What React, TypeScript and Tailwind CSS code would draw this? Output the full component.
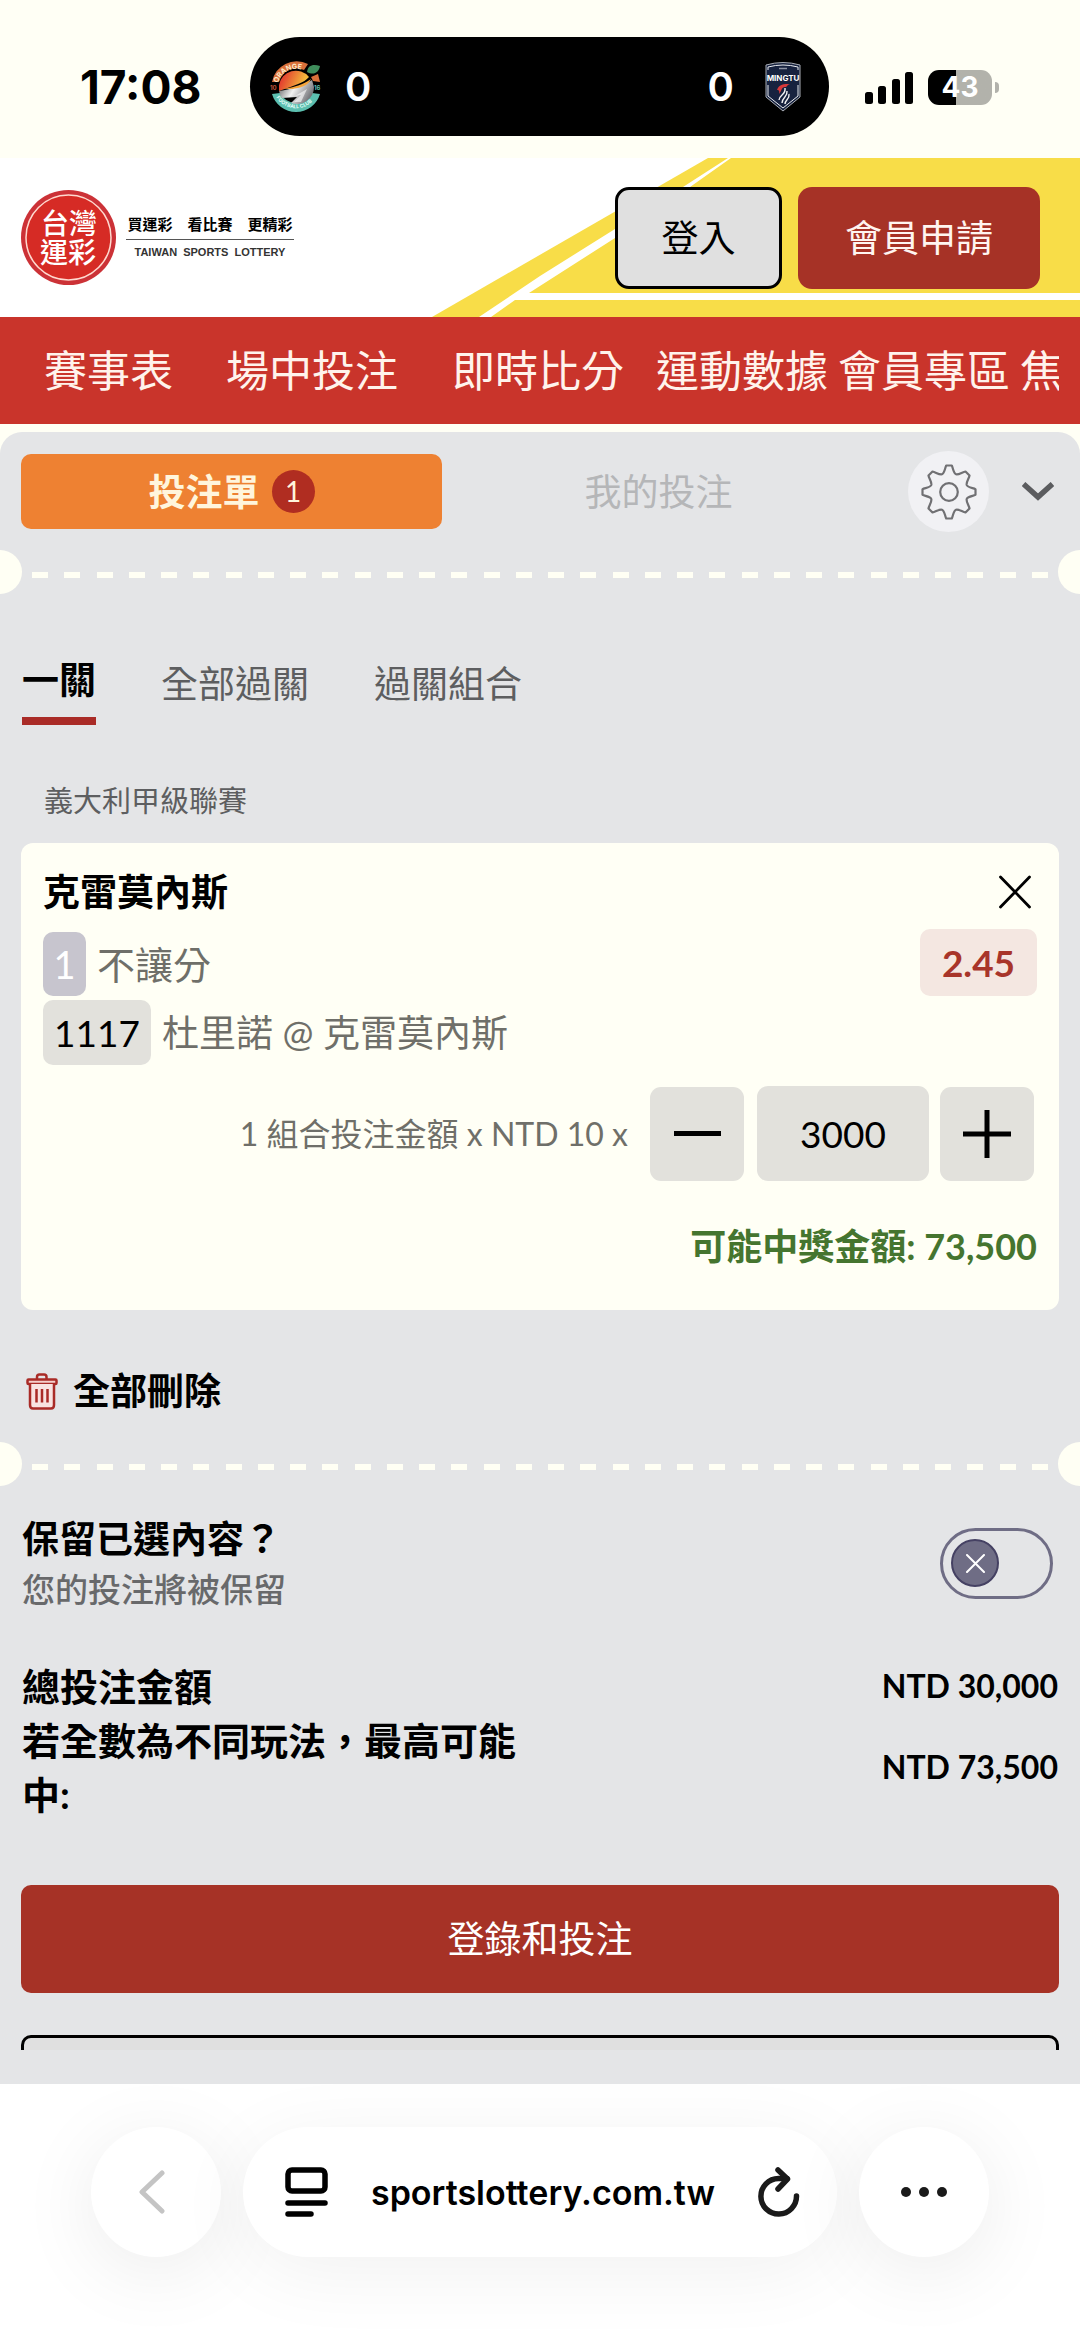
import { useState } from "react";

const navItems = [
  { label: "賽事表", space: "mr-[53px]" },
  { label: "場中投注", space: "mr-[54px]" },
  { label: "即時比分", space: "mr-8" },
  { label: "運動數據", space: "mr-[10px]" },
  { label: "會員專區", space: "mr-[10px]" },
  { label: "焦點", space: "" },
];

function OrangeLogo() {
  return (
    <svg className="w-[52px] h-[54px]" viewBox="0 0 52 54" aria-hidden="true">
      <defs>
        <linearGradient id="sun" x1="0" y1="0" x2="1" y2="0.3">
          <stop offset="0.2" stopColor="#e3402f" />
          <stop offset="0.9" stopColor="#f3b73c" />
        </linearGradient>
        <linearGradient id="ball" x1="0" y1="0" x2="1" y2="0.4">
          <stop offset="0" stopColor="#4d4d50" />
          <stop offset="0.5" stopColor="#f2f2f2" />
          <stop offset="1" stopColor="#77777c" />
        </linearGradient>
        <path id="arcTop" d="M8 23 A19 19 0 0 1 42 17" />
        <path id="arcBottom" d="M4 33 A23.5 23.5 0 0 0 48 33" />
      </defs>
      <path d="M2 22 A25 25 0 0 1 38 4 L34 10 A18 18 0 0 0 9 22 Z" fill="#d9703a" />
      <path d="M41 17 L48 14 L50 22 L43 21 Z" fill="#d9703a" />
      <path d="M2 34 A25 25 0 0 0 50 34 L42 33 A18 18 0 0 1 10 33 Z" fill="#5cbfb0" />
      <path d="M9 25 A17 17 0 0 1 39 17 C34 23 25 25 9 31 Z" fill="url(#sun)" />
      <path d="M9 31 C22 29 34 26 42 20 L44 27 A17 17 0 0 1 21 43 L27 37 L12 38 A16 16 0 0 1 9 31 Z" fill="url(#ball)" />
      <path d="M14 29 C24 27 33 25 41 19 C38 26 30 28 22 29 Z" fill="#f6a53a" />
      <path d="M25 36 L37 29 L31 42 L24 42 L31 35 Z" fill="#fff" opacity="0.6" />
      <path d="M37 12 C38 5 43 4 50 6 C49 12 44 16 37 12 Z" fill="#3f8d5b" />
      <text className="font-['Inter'] font-bold" fontSize="7" fill="#fde9c8">
        <textPath href="#arcTop">ORANGE</textPath>
      </text>
      <text className="font-['Inter'] font-bold" fontSize="5" fill="#e7fffa">
        <textPath href="#arcBottom" startOffset="5">FOOTBALL CLUB</textPath>
      </text>
      <text className="font-['Inter'] font-bold" x="0" y="30" fontSize="6" fill="#c0563a">10</text>
      <text className="font-['Inter'] font-bold" x="44" y="30" fontSize="6" fill="#5cbfb0">16</text>
    </svg>
  );
}

function MingtuLogo() {
  return (
    <svg className="w-[36px] h-[51px]" viewBox="0 0 36 51" aria-hidden="true">
      <path d="M1 4 Q18 -1 35 4 V36 L18 50 L1 36 Z" fill="#17223f" stroke="#a9adb5" strokeWidth="1" />
      <path d="M3 9 V6 Q18 2 33 6 V9 M3 24 V35 L18 47 L33 35 V24" fill="none" stroke="#e9ebef" strokeWidth="1" />
      <path d="M14 7.500 H22" stroke="#8d93a3" strokeWidth="1.500" />
      <text className="font-['Inter'] font-bold" x="18" y="20" fontSize="8" textAnchor="middle" fill="#fff">MINGTU</text>
      <path d="M12 29 C14 23 19 23 25 23 C21 24 23 26 20 26 C16 26 17 30 14 33 C15 29 13 29 12 29 Z" fill="#d8383a" />
      <path d="M14 39 C15 33 21 34 20 27 M17 42 C17 36 23 36 22 30 M20 43 C20 39 25 38 24 33" fill="none" stroke="#f3f3f5" strokeWidth="1.400" />
    </svg>
  );
}

function StatusBar() {
  return (
    <div className="flex items-start pt-[37px] pb-5 pl-[80px] pr-[81px] font-['Inter','Noto_Sans_CJK_TC',sans-serif] text-black">
      <span className="w-[130px] text-[46px] leading-[101px] font-bold">17:08</span>
      <div className="flex items-center justify-between w-[579px] h-[99px] ml-[40px] pl-5 pr-7 rounded-full bg-black text-white text-[40px] font-semibold">
        <div className="flex items-center gap-[23px]">
          <OrangeLogo />
          <span>0</span>
        </div>
        <div className="flex items-center gap-[31px]">
          <span>0</span>
          <MingtuLogo />
        </div>
      </div>
      <div className="flex items-center gap-[14px] h-[101px] ml-auto">
        <svg className="w-[49px] h-8" viewBox="0 0 49 32" aria-hidden="true">
          <rect x="0" y="20" width="8" height="12" rx="2.500" />
          <rect x="13" y="14" width="8" height="18" rx="2.500" />
          <rect x="27" y="7" width="8" height="25" rx="2.500" />
          <rect x="40" y="0" width="8" height="32" rx="2.500" />
        </svg>
        <div className="flex items-center gap-[3px]">
          <span className="w-16 h-[35px] rounded-[11px] bg-linear-to-r from-black from-43% to-[#b2b2ab] to-43% text-center text-white text-[28px] leading-[35px] font-bold">
            43
          </span>
          <span className="w-1 h-[11px] rounded-r-full bg-[#b2b2ab]"></span>
        </div>
      </div>
    </div>
  );
}

function Header() {
  return (
    <header className="grid bg-white">
      <svg className="col-start-1 row-start-1 justify-self-end w-[648px] h-[159px]" viewBox="0 0 648 159" aria-hidden="true">
        <path d="M0 159 L276 0 H648 V159 Z" fill="#f8dd48" />
        <path d="M47 159 L108 118 L183 71 L251 29 L296 0 H299 L258 29 L183 80 L97 135 H648 V142 H83 L59 159 Z" fill="#fff" />
      </svg>
      <div className="col-start-1 row-start-1 flex items-center justify-between pl-[21px] pr-10">
        <a href="#" className="flex items-center gap-[10px] text-black">
          <svg className="w-[95px] h-[95px]" viewBox="0 0 95 95" aria-hidden="true">
            <circle cx="47.500" cy="47.500" r="47.500" fill="#cc3237" />
            <circle cx="47.500" cy="47.500" r="42.500" fill="#d62b25" stroke="#ffd9cf" strokeWidth="1.500" />
            <g className="font-['Noto_Sans_CJK_TC',sans-serif] font-medium" fontSize="28" fill="#fff" textAnchor="middle">
              <text x="48" y="44">台灣</text>
              <text x="47" y="73">運彩</text>
            </g>
          </svg>
          <span className="flex flex-col items-center w-[168px] pb-1">
            <span className="text-[15px] leading-6 font-bold">買運彩　看比賽　更精彩</span>
            <span className="w-full h-px mt-[3px] mb-1 bg-[#555]"></span>
            <span className="font-['Liberation_Sans',sans-serif] text-[11px] leading-4 font-bold text-[#333]">
              TAIWAN&nbsp; SPORTS&nbsp; LOTTERY
            </span>
          </span>
        </a>
        <div className="flex gap-4 text-[37px]">
          <button className="w-[167px] h-[102px] rounded-[14px] border-[3px] border-black bg-[#e0e0e0] text-black">登入</button>
          <button className="w-[242px] h-[102px] rounded-[14px] bg-[#a63226] text-[#fff5f0]">會員申請</button>
        </div>
      </div>
    </header>
  );
}

function Perforation() {
  return (
    <div className="flex items-start h-11 overflow-hidden">
      <span className="w-[22px] h-11 shrink-0 rounded-r-full bg-[#fffff4]"></span>
      <div className="flex flex-1 justify-between mt-[22px] mx-[10px]">
        {Array.from({ length: 32 }, (_, i) => (
          <span key={i} className="w-4 h-[6px] bg-[#fffff4]"></span>
        ))}
      </div>
      <span className="w-[22px] h-11 shrink-0 rounded-l-full bg-[#fffff4]"></span>
    </div>
  );
}

function SlipTabs() {
  return (
    <div className="flex items-center pl-[21px] pr-[26px]">
      <button className="flex flex-1 items-center justify-center gap-3 h-[75px] rounded-[10px] bg-[#ee8132] text-[37px] font-bold text-[#fff5dc]">
        投注單
        <span className="w-[43px] h-[43px] rounded-full bg-[#b02d21] text-[28px] leading-[43px] font-normal">1</span>
      </button>
      <button className="flex-1 h-[75px] ml-[6px] text-[37px] text-[#b5b6b8]">我的投注</button>
      <button aria-label="設定" className="grid place-items-center w-[81px] h-[81px] ml-[39px] rounded-full bg-[#f1f1f4]">
        <svg className="w-[56px] h-[56px]" viewBox="0 0 56 56" fill="none" stroke="#707073" strokeWidth="2.200" strokeLinejoin="round" aria-hidden="true">
          <circle cx="28" cy="28" r="8.800" />
          <path d="M25.200 1.500 H30.800 C32 4 32.500 9.500 35 10.300 C38 11 41.500 7.800 44.500 7.500 L48.500 11.500 C48 14.500 45 18 45.700 21 C46.500 23.500 52 24 54.500 25.200 V30.800 C52 32 46.500 32.500 45.700 35 C45 38 48 41.500 48.500 44.500 L44.500 48.500 C41.500 48 38 45 35 45.700 C32.500 46.500 32 52 30.800 54.500 H25.200 C24 52 23.500 46.500 21 45.700 C18 45 14.500 48 11.500 48.500 L7.500 44.500 C8 41.500 11 38 10.300 35 C9.500 32.500 4 32 1.500 30.800 V25.200 C4 24 9.500 23.500 10.300 21 C11 18 8 14.500 7.500 11.500 L11.500 7.500 C14.500 8 18 11 21 10.300 C23.500 9.500 24 4 25.200 1.500 Z" />
        </svg>
      </button>
      <button aria-label="收合" className="ml-[33px]">
        <svg className="w-8 h-[19px]" viewBox="0 0 32 19" fill="none" stroke="#5b5c5f" strokeWidth="5.500" aria-hidden="true">
          <path d="M1.500 2 L16 15 L30.500 2" />
        </svg>
      </button>
    </div>
  );
}

function BetCard({ amount, setAmount }: { amount: number; setAmount: (n: number) => void }) {
  return (
    <article className="mx-[21px] px-[22px] pt-[21px] pb-9 rounded-xl bg-[#fffff5] text-[38px] text-[#6f6f69]">
      <div className="flex items-center justify-between h-14">
        <h2 className="text-[37px] font-bold text-black">克雷莫內斯</h2>
        <button aria-label="移除" className="mr-[6px]">
          <svg className="w-8 h-[34px]" viewBox="0 0 32 34" stroke="#000" strokeWidth="2.800" strokeLinecap="round" aria-hidden="true">
            <path d="M1.500 2 L30.500 32 M30.500 2 L1.500 32" />
          </svg>
        </button>
      </div>
      <div className="flex items-end h-[67px] mt-[9px]">
        <span className="w-[43px] h-16 rounded-[10px] bg-[#c7c5ce] text-center leading-[64px] text-white">1</span>
        <span className="flex-1 ml-[11px] leading-[64px]">不讓分</span>
        <span className="w-[117px] h-[67px] rounded-[10px] bg-[#f4e7e1] text-center text-[37px] leading-[67px] font-bold text-[#a8352a]">
          2.45
        </span>
      </div>
      <div className="flex items-center h-[65px] mt-1 text-[37px]">
        <span className="w-[108px] h-[65px] rounded-[10px] bg-[#e2e1dc] text-center leading-[65px] text-black">1117</span>
        <span className="ml-[11px] leading-[65px]">杜里諾 @ 克雷莫內斯</span>
      </div>
      <div className="flex items-center justify-end mt-[21px] mr-[3px]">
        <label htmlFor="stake" className="mr-[22px] text-[32px]">
          1 組合投注金額 x NTD 10 x
        </label>
        <button
          aria-label="減少"
          className="grid place-items-center w-[94px] h-[94px] rounded-[11px] bg-[#e2e1dc]"
          onClick={() => setAmount(Math.max(0, amount - 1))}
        >
          <span className="w-[47px] h-[5px] bg-black"></span>
        </button>
        <input
          id="stake"
          inputMode="numeric"
          className="w-[172px] h-[95px] ml-[13px] mr-[11px] rounded-[11px] bg-[#e2e1dc] text-center text-[37px] text-black"
          value={amount}
          onChange={(e) => setAmount(Number(e.target.value) || 0)}
        />
        <button
          aria-label="增加"
          className="grid place-items-center w-[94px] h-[94px] rounded-[11px] bg-[#e2e1dc]"
          onClick={() => setAmount(amount + 1)}
        >
          <svg className="w-12 h-12" viewBox="0 0 48 48" stroke="#000" strokeWidth="5" aria-hidden="true">
            <path d="M0 24 H48 M24 0 V48" />
          </svg>
        </button>
      </div>
      <p className="mt-[37px] text-right text-[36px] leading-[56px] font-bold text-[#45752f]">
        可能中獎金額: {(amount * 24.5).toLocaleString("en-US")}
      </p>
    </article>
  );
}

function BrowserBar() {
  return (
    <nav className="flex justify-center gap-[22px] px-[91px] pt-[43px] pb-[91px] bg-white overflow-hidden font-['Inter',sans-serif] text-black">
      <button aria-label="返回" className="grid place-items-center w-[130px] h-[130px] shrink-0 rounded-full bg-white shadow-[0_14px_80px_rgba(0,0,0,0.08)]">
        <svg className="w-[26px] h-[44px] mr-2" viewBox="0 0 26 44" fill="none" stroke="#c4c4c4" strokeWidth="5" strokeLinecap="round" strokeLinejoin="round" aria-hidden="true">
          <path d="M23 3 L3 22 L23 41" />
        </svg>
      </button>
      <div className="flex flex-1 items-center h-[130px] pl-[42px] pr-[37px] rounded-full bg-white shadow-[0_14px_80px_rgba(0,0,0,0.06)]">
        <svg className="w-[43px] h-[50px]" viewBox="0 0 43 50" fill="none" stroke="#000" strokeWidth="5.500" strokeLinecap="round" aria-hidden="true">
          <rect x="3" y="3" width="37" height="21" rx="4" />
          <path d="M3 36 H40 M3 47 H26" />
        </svg>
        <span className="flex-1 text-center text-[34px] font-semibold">sportslottery.com.tw</span>
        <button aria-label="重新載入">
          <svg className="w-[42px] h-[50px]" viewBox="0 0 42 50" fill="none" stroke="#1a1a1a" strokeWidth="5.500" strokeLinecap="round" strokeLinejoin="round" aria-hidden="true">
            <path d="M38.500 29 A17.800 17.800 0 1 1 20.500 11.500 H29" />
            <path d="M20 3 L29.500 12 L20 22" />
          </svg>
        </button>
      </div>
      <button aria-label="更多" className="grid place-items-center w-[130px] h-[130px] shrink-0 rounded-full bg-white shadow-[0_14px_80px_rgba(0,0,0,0.08)]">
        <svg className="w-[46px] h-[10px]" viewBox="0 0 46 10" fill="#1a1a1a" aria-hidden="true">
          <circle cx="5" cy="5" r="5" />
          <circle cx="23" cy="5" r="5" />
          <circle cx="41" cy="5" r="5" />
        </svg>
      </button>
    </nav>
  );
}

export default function App() {
  const [amount, setAmount] = useState(3000);
  const [keep, setKeep] = useState(false);

  return (
    <div lang="zh-Hant" className="min-h-screen bg-[#fffff5] font-['Lato','Noto_Sans_CJK_TC',sans-serif]">
      <StatusBar />
      <Header />
      <nav className="bg-[#c9342b] px-[21px]">
        <div className="flex h-[107px] pl-[23px] overflow-hidden whitespace-nowrap text-[43px] leading-[107px] text-[#fff3ec]">
          {navItems.map((item) => (
            <a key={item.label} href="#" className={item.space}>
              {item.label}
            </a>
          ))}
        </div>
      </nav>

      <main className="mt-2 pt-[19px] pb-[34px] rounded-t-[22px] bg-[#e4e5e7]">
        <SlipTabs />
        <div className="mt-[18px]">
          <Perforation />
        </div>

        <div className="flex items-end gap-[65px] mt-[58px] px-[22px] text-[37px] leading-[56px] text-[#5d5e60]">
          <button className="pb-[9px] border-b-8 border-[#a92b27] font-bold text-black">一關</button>
          <button className="pb-[13px]">全部過關</button>
          <button className="pb-[13px]">過關組合</button>
        </div>

        <p className="mt-[54px] mb-5 ml-11 text-[29px] leading-[44px] text-[#5d5e60]">義大利甲級聯賽</p>
        <BetCard amount={amount} setAmount={setAmount} />

        <button className="flex items-center gap-[15px] mt-[53px] ml-[26px] h-14 text-[37px] font-bold text-black">
          <svg className="w-8 h-[37px]" viewBox="0 0 32 37" fill="none" stroke="#a92b27" strokeWidth="2.500" strokeLinejoin="round" aria-hidden="true">
            <path d="M11 6 V4 Q11 1.500 13.500 1.500 H18 Q20.500 1.500 20.500 4 V6" />
            <rect x="1.500" y="6.500" width="29" height="4.500" rx="1" fill="#f6cfcb" />
            <path d="M4 11 V32 Q4 35.500 7 35.500 H25 Q28 35.500 28 32 V11" fill="#f8e3e1" />
            <path d="M10.500 16 V29.500 M16 16 V29.500 M21.500 16 V29.500" />
          </svg>
          全部刪除
        </button>
        <div className="mt-[23px]">
          <Perforation />
        </div>

        <div className="flex items-center justify-between mt-[27px] pl-[22px] pr-[27px]">
          <label htmlFor="keep" className="flex flex-col">
            <span className="text-[37px] leading-[52px] font-bold text-black">保留已選內容？</span>
            <span className="text-[33px] leading-[48px] font-medium text-[#68696b]">您的投注將被保留</span>
          </label>
          <div className="grid items-center">
            <input
              id="keep"
              type="checkbox"
              className="col-start-1 row-start-1 appearance-none w-[113px] h-[71px] rounded-full border-[3px] border-[#6f6d85]"
              checked={keep}
              onChange={(e) => setKeep(e.target.checked)}
            />
            <span
              className={`col-start-1 row-start-1 grid place-items-center w-12 h-12 mx-[11px] rounded-full border-2 border-[#454163] bg-[#6f6d85] pointer-events-none ${
                keep ? "justify-self-end" : ""
              }`}
            >
              <svg className="w-[19px] h-[19px]" viewBox="0 0 19 19" stroke="#fff" strokeWidth="2" strokeLinecap="round" aria-hidden="true">
                <path d="M1 1 L18 18 M18 1 L1 18" />
              </svg>
            </span>
          </div>
        </div>

        <dl className="mt-[46px] px-[22px] text-[38px] leading-[54px] font-bold text-black">
          <div className="flex items-center justify-between">
            <dt>總投注金額</dt>
            <dd className="text-[32px]">NTD {(amount * 10).toLocaleString("en-US")}</dd>
          </div>
          <div className="flex items-center justify-between">
            <dt className="w-1/2">若全數為不同玩法，最高可能中:</dt>
            <dd className="text-[32px]">NTD {(amount * 24.5).toLocaleString("en-US")}</dd>
          </div>
        </dl>

        <div className="px-[21px] mt-16">
          <button className="w-full h-[108px] rounded-[10px] bg-[#a63226] text-[37px] text-white">登錄和投注</button>
          <div className="h-[15px] mt-[42px] overflow-hidden">
            <button aria-label="取消" className="w-full h-[108px] rounded-[10px] border-[3px] border-black bg-[#e0e0e0]"></button>
          </div>
        </div>
      </main>
      <BrowserBar />
    </div>
  );
}
